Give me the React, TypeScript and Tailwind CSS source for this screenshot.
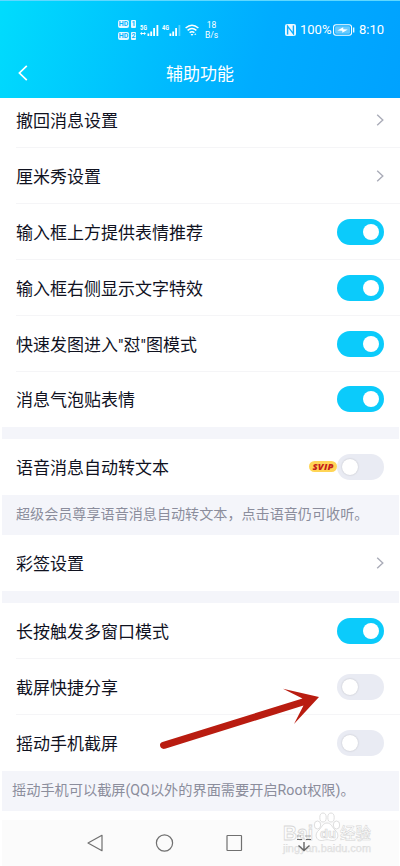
import React from 'react';
import clsx from 'clsx';

interface RowProps {
  label: string;
  on?: boolean;
  link?: boolean;
  svip?: boolean;
  last?: boolean;
  first?: boolean;
}

const Toggle = ({ on }: { on?: boolean }) => (
  <div
    className={clsx(
      'flex h-[26px] w-[47px] items-center rounded-full',
      on ? 'justify-end bg-[#0bcbfb] pr-[5px]' : 'justify-start bg-[#e9ebf3] pl-[5px]'
    )}
  >
    <div className={clsx('h-4 w-4 rounded-full bg-white', !on && 'shadow-[0_0_2px_rgba(0,0,0,0.2)]')} />
  </div>
);

const Chevron = () => (
  <svg className="h-3 w-2" viewBox="0 0 8 12" fill="none" stroke="#aaacb8" strokeWidth="1.4">
    <path d="M1.2 0.8 6.8 6 1.2 11.2" />
  </svg>
);

const Row = ({ label, on, link, svip, last, first }: RowProps) => (
  <div
    className={clsx(
      'ml-4 flex items-center justify-between border-b pr-4',
      first ? 'h-[50px] pb-1.5' : 'h-14',
      last ? 'border-transparent' : 'border-[#f5f5f7]'
    )}
  >
    <span className="pt-0.5 text-[17px] leading-6 whitespace-nowrap text-[#10121f]">{label}</span>
    <div className="flex items-center">
      {svip && (
        <span className="flex h-[11px] w-7 items-center justify-center rounded-full bg-[#ffd556] font-['Open_Sans',sans-serif] text-[9.5px] leading-none font-extrabold tracking-[0.2px] text-[#c5201b] italic">
          SVIP
        </span>
      )}
      {link ? <Chevron /> : <Toggle on={on} />}
    </div>
  </div>
);

const Gap = () => <div className="mr-px ml-0.5 h-3 bg-[#f4f5fa]" />;

const Sim = ({ label, weak }: { label: string; weak?: boolean }) => (
  <svg className="h-[14px] w-[19px]" viewBox="0 0 19 14" fill="#fff">
    <text x="0" y="6.5" fontSize="7.6" fontWeight="700" fontFamily="Roboto, sans-serif" textLength="7" lengthAdjust="spacingAndGlyphs">
      {label}
    </text>
    {!weak && <path d="M0 10.5 2 9v1h2V9l2 1.500L4 12v-1H2v1z" />}
    <path d="M7.500 10.500h1.800V13H7.500zM10.300 8.500h1.800V13h-1.800zM13.200 5h1.800v8h-1.800z" />
    <path d="M16.500 2h1.800v11h-1.800z" opacity={weak ? 0.35 : 1} />
  </svg>
);

const HdBadge = ({ n }: { n: number }) => (
  <div className="flex gap-0.5 text-[7px] leading-[8px] font-bold text-[#09b5ff]">
    <span className="h-2 w-[11px] rounded-[2px] bg-white/90 text-center">HD</span>
    <span className="h-2 w-[5px] rounded-[1px] bg-white/90 text-center">{n}</span>
  </div>
);

const StatusBar = () => (
  <div className="flex h-[48px] items-center pt-[9px] pr-4 pl-[118px] font-[Roboto,sans-serif] text-white">
    <div className="flex flex-col gap-1">
      <HdBadge n={1} />
      <HdBadge n={2} />
    </div>
    <div className="ml-1 flex gap-[3px]">
      <Sim label="5G" />
      <Sim label="4G" weak />
    </div>
    <svg className="ml-1 h-3 w-[14px]" viewBox="0 0 14 12" fill="none" stroke="#fff" strokeWidth="1.5">
      <path d="M.6 4Q7-1.6 13.4 4M2.6 6.4q4.4-3.6 8.8 0M4.6 8.7q2.4-1.8 4.8 0" />
      <path d="M5.600 10h2.800L7 12zM9.200 10.800l1.100-1.500 1.100 1.500z" fill="#fff" stroke="none" />
    </svg>
    <div className="ml-[5px] w-[15px] text-center text-[8.5px] leading-[10px]">
      <div>18</div>
      <div>B/s</div>
    </div>
    <div className="ml-auto flex items-center">
      <svg className="mr-1 h-3 w-[11px]" viewBox="0 0 11 12">
        <rect width="11" height="12" rx="2" fill="#fff" fillOpacity=".92" />
        <path d="M2.600 10.500V2.200L8.400 9.800V1.500" fill="none" stroke="#08acff" strokeWidth="1.4" />
      </svg>
      <span className="w-[31px] text-[13px] leading-4 whitespace-nowrap">100%</span>
      <svg className="mr-[4px] ml-[2px] h-3 w-[22px]" viewBox="0 0 23 12">
        <rect x=".6" y=".6" width="18.800" height="10.800" rx="2.600" fill="none" stroke="#fff" strokeWidth="1.1" />
        <rect x="2.200" y="2.200" width="15.600" height="7.600" rx="1.200" fill="#fff" fillOpacity=".4" />
        <path d="M4.500 6.600 10.700 3v2.200l4.800.3L9.700 9V6.800z" fill="#fff" />
        <path d="M21 3.500h1.300v5H21z" fill="#fff" />
      </svg>
      <span className="w-[25px] text-[13px] leading-4 whitespace-nowrap">8:10</span>
    </div>
  </div>
);

const Header = () => (
  <header className="h-[98px] border-t border-[#5fd8ff] bg-linear-[105deg,#00dcfd_0%,#00bffe_38%,#00acff_65%,#00a2ff_100%] bg-origin-border">
    <StatusBar />
    <div className="grid h-[47px] grid-cols-[1fr_auto_1fr] items-center px-4">
      <svg className="ml-0.5 h-4 w-[10px]" viewBox="0 0 10 16" fill="none" stroke="#fff" strokeWidth="1.7">
        <path d="M8.800.8 1.400 8l7.400 7.200" />
      </svg>
      <h1 className="pt-0.5 text-[17px] leading-6 text-white">辅助功能</h1>
    </div>
  </header>
);

const Watermark = () => (
  <div className="absolute top-[-9px] left-[282px] h-[48px] w-[94px]">
    <svg className="h-full w-full" viewBox="0 0 94 48" fill="#fff" stroke="#d6d6d6" strokeWidth=".8">
      <text x="1" y="29" fontSize="21" fontWeight="700" fontFamily="'Liberation Sans', sans-serif" textLength="30" lengthAdjust="spacingAndGlyphs" fillOpacity=".6">
        Bai
      </text>
      <ellipse cx="35.500" cy="14" rx="3.200" ry="4" />
      <ellipse cx="41" cy="6.500" rx="3.200" ry="4.500" />
      <ellipse cx="49" cy="6.500" rx="3.200" ry="4.500" />
      <ellipse cx="54.500" cy="14" rx="3.200" ry="4" />
      <path d="M45 12c-4 0-5 4-8 7-5 4-3 10.500 2 10.500 3 0 4-.8 6-.8s3 .8 6 .8c5 0 7-6.500 2-10.500-3-3-4-7-8-7z" />
      <text x="38" y="27" fontSize="13" fontWeight="700" fontFamily="'Liberation Sans', sans-serif" fill="#fbfbfb" strokeWidth=".7">
        du
      </text>
      <text x="58" y="28" fontSize="15.500" fontWeight="500" fontFamily="'Noto Sans CJK SC', sans-serif" strokeWidth=".5" stroke="#d2d2d2">
        经验
      </text>
      <text x="1" y="40.500" fontSize="10" fontFamily="'Liberation Sans', sans-serif" strokeWidth=".25" textLength="88" lengthAdjust="spacingAndGlyphs" fill="#e8e8e8">
        jingyan.baidu.com
      </text>
    </svg>
  </div>
);

const NavBar = () => (
  <nav className="relative mt-[9px] mr-px ml-0.5 h-[46px] bg-[#fbfbfb]">
    <svg className="h-[46px] w-[397px]" viewBox="2 820 397 46" fill="none" stroke="#707070" strokeWidth="1.2">
      <path d="M102 835.300v15.400L88 843z" strokeLinejoin="round" />
      <circle cx="164.500" cy="843" r="8.100" />
      <rect x="227" y="835.500" width="14.500" height="15" rx=".5" />
    </svg>
    <div className="absolute inset-0 -left-0.5">
      <Watermark />
      <svg className="absolute top-[14px] left-[296px] h-[18px] w-4" viewBox="296 834 16 18" fill="none" stroke="#666" strokeWidth="1">
        <path d="M297 836h4m4 0h6" opacity=".5" />
        <path d="M297 839.500h5m4 0h5" />
        <path d="M304 842v8M298.500 845.500 304 850.500l5.500-5" strokeWidth="1.400" />
      </svg>
    </div>
  </nav>
);

const Arrow = () => (
  <svg className="pointer-events-none absolute top-[684px] left-[156px] h-[68px] w-[168px]" viewBox="156 684 168 68" fill="#b91c10">
    <path d="M162.500 742 302.500 698.500 283 688.700 319 697 294 724 303.500 705.500 165 748.800C160 750 158 743 162.500 742Z" />
  </svg>
);

export default function App() {
  return (
    <div className="relative h-[866px] w-[400px] overflow-hidden bg-white font-[Roboto,'Noto_Sans_CJK_SC',sans-serif]">
      <Header />
      <main>
        <Row label="撤回消息设置" link first />
        <Row label="厘米秀设置" link />
        <Row label="输入框上方提供表情推荐" on />
        <Row label="输入框右侧显示文字特效" on />
        <Row label={'快速发图进入"怼"图模式'} on />
        <div className="-mt-px">
          <Row label="消息气泡贴表情" on last />
        </div>
        <Gap />
        <Row label="语音消息自动转文本" svip last />
        <p className="mr-px ml-0.5 h-10 bg-[#f4f5fa] pl-3.5 text-[14.1px] leading-[38px] whitespace-nowrap text-[#8b8d9c]">
          超级会员尊享语音消息自动转文本，点击语音仍可收听。
        </p>
        <Row label="彩签设置" link last />
        <Gap />
        <Row label="长按触发多窗口模式" on />
        <Row label="截屏快捷分享" />
        <Row label="摇动手机截屏" last />
        <p className="mr-px ml-0.5 h-10 bg-[#f4f5fa] pl-2.5 text-[14.200px] leading-[38px] whitespace-nowrap text-[#8b8d9c]">
          摇动手机可以截屏(QQ以外的界面需要开启Root权限)。
        </p>
      </main>
      <NavBar />
      <Arrow />
    </div>
  );
}
